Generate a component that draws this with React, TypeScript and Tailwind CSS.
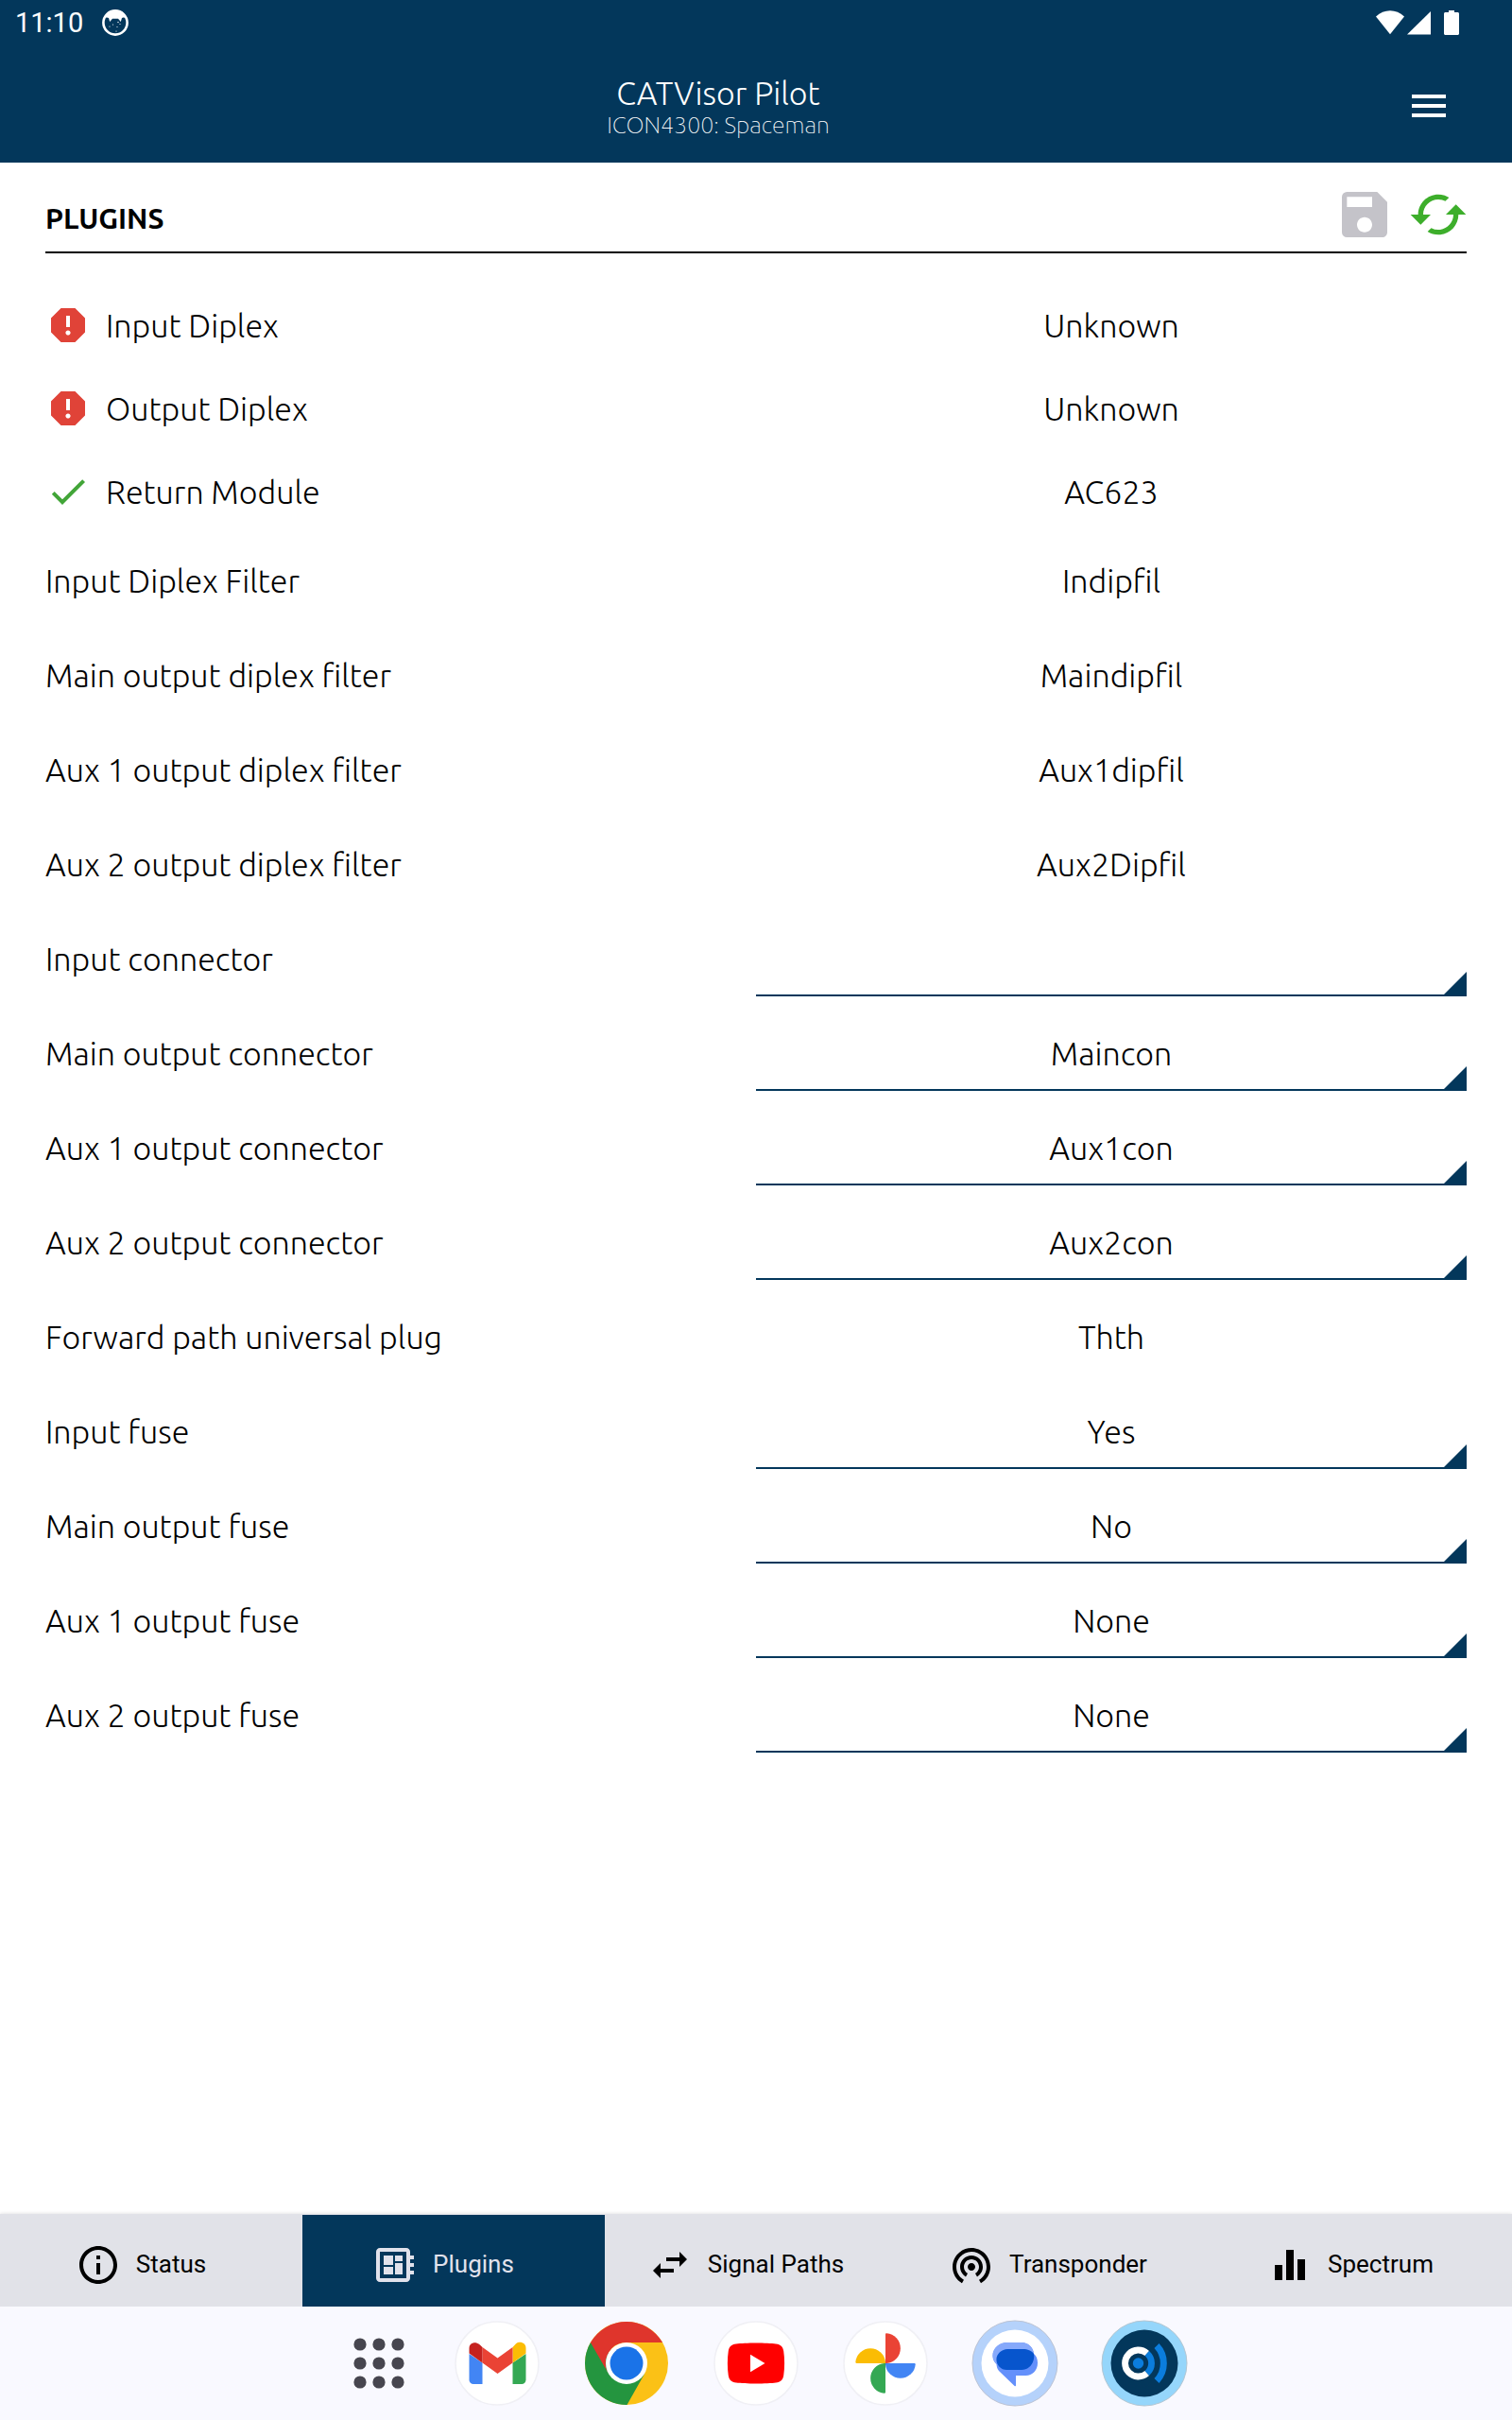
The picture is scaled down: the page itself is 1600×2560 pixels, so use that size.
import { useState } from 'react';
import type { ReactNode } from 'react';
import type { IconType } from 'react-icons';
import {
  MdCached,
  MdCheck,
  MdDeveloperBoard,
  MdEqualizer,
  MdInfoOutline,
  MdMenu,
  MdReport,
  MdSave,
  MdSwapHoriz,
  MdWifiTethering,
} from 'react-icons/md';

type Module = { label: string; value: string; ok: boolean };
type Field = { label: string; value: string; options?: string[] };

const modules: Module[] = [
  { label: 'Input Diplex', value: 'Unknown', ok: false },
  { label: 'Output Diplex', value: 'Unknown', ok: false },
  { label: 'Return Module', value: 'AC623', ok: true },
];

const fuseOptions = ['None', 'Yes', 'No'];

const fields: Field[] = [
  { label: 'Input Diplex Filter', value: 'Indipfil' },
  { label: 'Main output diplex filter', value: 'Maindipfil' },
  { label: 'Aux 1 output diplex filter', value: 'Aux1dipfil' },
  { label: 'Aux 2 output diplex filter', value: 'Aux2Dipfil' },
  { label: 'Input connector', value: '', options: [''] },
  { label: 'Main output connector', value: 'Maincon', options: ['', 'Maincon'] },
  { label: 'Aux 1 output connector', value: 'Aux1con', options: ['', 'Aux1con'] },
  { label: 'Aux 2 output connector', value: 'Aux2con', options: ['', 'Aux2con'] },
  { label: 'Forward path universal plug', value: 'Thth' },
  { label: 'Input fuse', value: 'Yes', options: fuseOptions },
  { label: 'Main output fuse', value: 'No', options: fuseOptions },
  { label: 'Aux 1 output fuse', value: 'None', options: fuseOptions },
  { label: 'Aux 2 output fuse', value: 'None', options: fuseOptions },
];

const tabs: { label: string; icon: IconType }[] = [
  { label: 'Status', icon: MdInfoOutline },
  { label: 'Plugins', icon: MdDeveloperBoard },
  { label: 'Signal Paths', icon: MdSwapHoriz },
  { label: 'Transponder', icon: MdWifiTethering },
  { label: 'Spectrum', icon: MdEqualizer },
];

const StatusBar = () => (
  <div className="flex h-[52px] items-center justify-between pb-1 pl-4 pr-14 font-['Roboto',sans-serif] font-normal">
    <div className="flex items-center gap-5">
      <span className="text-[29px] leading-8">11:10</span>
      <svg viewBox="0 0 28 28" className="size-7" aria-hidden="true">
        <circle cx="14" cy="14" r="12.6" fill="none" stroke="#fff" strokeWidth="2.6" />
        <path d="M2 9C4 4 9 1.500 14 1.500S24 4 26 9l-3.500-.5L21 9l-1.200 4L17 9.800h-6L8.200 13 7 9l-2-.5z" fill="#fff" />
        <g fill="#fff">
          <circle cx="8" cy="18" r=".6" />
          <circle cx="11.500" cy="16" r=".6" />
          <circle cx="16" cy="18.500" r=".6" />
          <circle cx="19" cy="15.500" r=".6" />
          <circle cx="15" cy="23" r=".6" />
          <circle cx="17" cy="13.500" r=".7" />
        </g>
      </svg>
    </div>
    <svg viewBox="0 0 88 26" className="h-[26px] w-[88px]" fill="#fff" aria-hidden="true">
      <path d="M0 6.500C4.500 2.500 9.500 0.300 15 0.300S25.500 2.500 30 6.500L15 25.300z" />
      <path d="M58 1v24.500H33z" />
      <path d="M77 0h6v2h3.500c.8 0 1.500.7 1.500 1.500v21c0 .8-.7 1.500-1.500 1.500h-13c-.8 0-1.500-.7-1.500-1.500v-21c0-.8.700-1.500 1.500-1.500H77z" />
    </svg>
  </div>
);

const FieldRow = ({ field, id }: { field: Field; id: string }) => {
  const [value, setValue] = useState(field.value);

  return (
    <div className="grid h-[100px] grid-cols-2 items-center">
      <label htmlFor={id}>{field.label}</label>
      {field.options ? (
        <div className="relative">
          <select
            id={id}
            value={value}
            onChange={(e) => setValue(e.target.value)}
            className="block h-20 w-full appearance-none border-b-2 border-[#03375b] bg-transparent pt-0.5 text-center [text-align-last:center] outline-none"
          >
            {field.options.map((option) => (
              <option key={option} value={option}>{option}</option>
            ))}
          </select>
          <svg viewBox="0 0 24 24" className="pointer-events-none absolute right-0 bottom-0.5 size-6" aria-hidden="true">
            <path d="M24 0v24H0z" fill="#03375b" />
          </svg>
        </div>
      ) : (
        <output id={id} className="text-center">{value}</output>
      )}
    </div>
  );
};

const AppButton = ({ label, children }: { label: string; children: ReactNode }) => (
  <button type="button" aria-label={label} className="size-[88px] shrink-0">
    <svg viewBox="0 0 88 88" className="size-full overflow-visible">{children}</svg>
  </button>
);

const WhiteDisc = () => <circle cx="44" cy="44" r="44" fill="#fff" stroke="#f0f0f5" strokeWidth="1.500" />;

const Taskbar = () => (
  <div className="flex h-[120px] items-center justify-center gap-[49px] bg-[#f9f9ff] pl-6">
    <button type="button" aria-label="All apps" className="w-16">
      <svg viewBox="0 0 64 64" className="size-16" fill="#47464f">
        {[12, 32, 52].map((cy) =>
          [12, 32, 52].map((cx) => <circle key={`${cx}-${cy}`} cx={cx} cy={cy} r="6.600" />)
        )}
      </svg>
    </button>

    <AppButton label="Gmail">
      <WhiteDisc />
      <path d="M14.500 34v27.500a4.500 4.500 0 0 0 4.500 4.500h9.500V43.500z" fill="#4285f4" />
      <path d="M60.500 43.500V66H70a4.500 4.500 0 0 0 4.500-4.500V34z" fill="#34a853" />
      <path d="M60.500 27v16.500l14-10v-5.500c0-5.800-6.500-7.800-10.500-4.700z" fill="#fbbc04" />
      <path d="M28.500 43.500V27L44.500 38.500 60.500 27v16.500L44.500 55z" fill="#ea4335" />
      <path d="M14.500 28v5.500l14 10V27L25 23.800c-4-3.300-10.500-1.600-10.500 4.200z" fill="#c5221f" />
    </AppButton>

    <AppButton label="Chrome">
      <circle cx="44" cy="44" r="44" fill="#fbc116" />
      <path d="M5.900 22A44 44 0 0 0 44.500 88L63.100 55 44 44z" fill="#24953f" />
      <path d="M5.900 22A44 44 0 0 1 82.100 22H44a22 22 0 0 0-19.100 33z" fill="#df352c" />
      <circle cx="44" cy="44" r="22" fill="#fff" />
      <circle cx="44" cy="44" r="17.500" fill="#1a73e8" />
    </AppButton>

    <AppButton label="YouTube">
      <WhiteDisc />
      <path d="M23 23.500c9-1.300 33-1.300 42 0 5 .7 7.500 3 8.200 7.500 1.200 8 1.200 18 0 26-.7 4.500-3.200 6.800-8.200 7.500-9 1.300-33 1.300-42 0-5-.7-7.500-3-8.200-7.500-1.200-8-1.200-18 0-26 .7-4.500 3.200-6.800 8.200-7.500z" fill="#f00" />
      <path d="M38 34.800v18.400L53.500 44z" fill="#fff" />
    </AppButton>

    <AppButton label="Photos">
      <WhiteDisc />
      <path d="M44 44V13.500c0-.8.500-1.200 1.200-1.200a15.900 15.900 0 0 1 0 31.700z" fill="#ea4335" />
      <path d="M44 44h30.500c.8 0 1.200.5 1.200 1.200a15.900 15.900 0 0 1-31.700 0z" fill="#4285f4" />
      <path d="M44 44v30.500c0 .8-.5 1.200-1.200 1.200a15.900 15.900 0 0 1 0-31.700z" fill="#34a853" />
      <path d="M44 44H13.500c-.8 0-1.200-.5-1.200-1.200a15.900 15.900 0 0 1 31.700 0z" fill="#fbbc04" />
    </AppButton>

    <AppButton label="Messages">
      <circle cx="44" cy="44" r="45" fill="#b5d2fb" stroke="#bcc3d3" strokeWidth="1" />
      <circle cx="44" cy="44" r="35.500" fill="#fff" />
      <path d="M36 22h15c7 0 12.500 5 13 12 2.500 2 4 5 4 9.500 0 8-5.500 13.500-12.500 13.500H45v10.500c0 .8-.8 1-1.400.5L27 52c-1.500-1.700-2.300-4-2.500-7-2.500-2.500-4-5.500-4-9C20.500 28 27.500 22 36 22z" fill="#6490fb" />
      <path d="M36 22h15c7 0 12.500 5 13 12-2.500-3.500-6-5-10.500-5H37C29.500 29 24.500 34 24.500 40v5c-2.500-2.500-4-5.500-4-9C20.500 28 27.500 22 36 22z" fill="#86a9fb" />
      <path d="M36.500 29h16c4.500 0 9 1.500 11.500 5 .5 2.500.3 5-.6 7.500C61.700 47 57 51 51 51H35.500c-6.500 0-11-5-11-11S30 29 36.500 29z" fill="#0755cd" />
    </AppButton>

    <AppButton label="CATVisor Pilot">
      <circle cx="44" cy="44" r="45" fill="#95d6fb" stroke="#b4c6d2" strokeWidth="1" />
      <circle cx="44" cy="44" r="35.500" fill="#03375b" />
      <circle cx="37.500" cy="44" r="5.700" fill="#0b7ddd" />
      <path d="M46.800 33.500A14 14 0 1 0 46.800 54.500" fill="none" stroke="#fff" strokeWidth="6.800" />
      <path d="M46.800 33.500A14 14 0 0 1 46.800 54.500" fill="none" stroke="#0b7ddd" strokeWidth="6.800" />
      <path d="M57 25.500A27 27 0 0 1 57 62.500" fill="none" stroke="#0b7ddd" strokeWidth="7" />
    </AppButton>
  </div>
);

const App = () => {
  const [activeTab, setActiveTab] = useState('Plugins');

  return (
    <div className="flex min-h-screen flex-col bg-white text-black">
      <header className="bg-[#03375b] font-['Ubuntu','Open_Sans',sans-serif] font-light text-white">
        <StatusBar />
        <div className="flex h-[120px] items-center px-12">
          <div className="flex-1 pt-0.5 text-center">
            <h1 className="text-[34px] leading-[38px]">CATVisor Pilot</h1>
            <p className="text-[25px] leading-[30px] font-thin">ICON4300: Spaceman</p>
          </div>
          <button type="button" aria-label="Menu" className="flex w-20 justify-center">
            <MdMenu size={48} />
          </button>
        </div>
      </header>

      <main className="flex-1 px-12 font-['Ubuntu','Open_Sans',sans-serif]">
        <div className="flex h-24 items-center justify-between border-b-2 border-black pt-4">
          <h2 className="pt-2 text-[30px] leading-10 font-bold">PLUGINS</h2>
          <div className="-mr-0.5 flex items-center gap-3.5">
            <button type="button" aria-label="Save" className="text-[#c4c3c9]">
              <MdSave size={64} />
            </button>
            <button type="button" aria-label="Refresh" className="text-[#3dae2b]">
              <MdCached size={64} />
            </button>
          </div>
        </div>

        <div className="pt-8 text-[34px] leading-10 font-light">
          {modules.map((module) => (
            <div key={module.label} className="grid h-[88px] grid-cols-2 items-center">
              <div className="flex items-center gap-4">
                {module.ok ? (
                  <MdCheck size={48} className="text-[#42a538]" />
                ) : (
                  <MdReport size={48} className="text-[#e04338]" />
                )}
                <span>{module.label}</span>
              </div>
              <span className="text-center">{module.value}</span>
            </div>
          ))}
          {fields.map((field, i) => (
            <FieldRow key={field.label} field={field} id={`field-${i}`} />
          ))}
        </div>
      </main>

      <nav className="grid h-[98px] grid-cols-5 bg-[#e1e2e8] pt-px font-['Roboto',sans-serif] text-[26px] shadow-[0_0_4px_rgba(0,0,0,0.15)]">
        {tabs.map(({ label, icon: Icon }) => (
          <button
            key={label}
            type="button"
            onClick={() => setActiveTab(label)}
            className={`flex items-center justify-center gap-4 pt-2 pr-[22px] ${
              activeTab === label ? 'bg-[#03375b] text-[#e1e2ec]' : 'text-black'
            }`}
          >
            <Icon size={48} />
            {label}
          </button>
        ))}
      </nav>

      <Taskbar />
    </div>
  );
};

export default App;
